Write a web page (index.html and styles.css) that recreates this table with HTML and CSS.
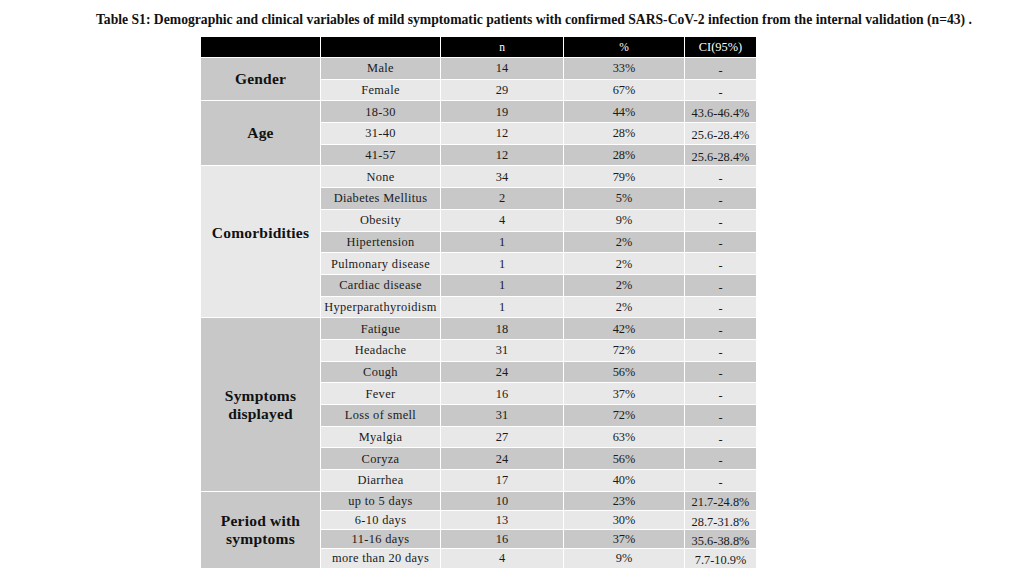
FILE: index.html
```html
<!DOCTYPE html>
<html lang="en">
<head>
<meta charset="utf-8">
<title>Table S1</title>
<link rel="stylesheet" href="styles.css">
</head>
<body>
<div class="page">
  <h1 class="title">Table S1: Demographic and clinical variables of mild symptomatic patients with confirmed SARS-CoV-2 infection from the internal validation (n=43) .</h1>
  <table class="data">
    <colgroup>
      <col class="c1"><col class="c2"><col class="c3"><col class="c4"><col class="c5">
    </colgroup>
    <thead>
      <tr class="head"><th></th><th></th><th>n</th><th>%</th><th class="ci">CI(95%)</th></tr>
    </thead>
    <tbody>
      <tr class="r dk"><td class="grp dk" rowspan="2">Gender</td><td class="lbl">Male</td><td>14</td><td>33%</td><td class="ci">-</td></tr>
      <tr class="r lt"><td class="lbl">Female</td><td>29</td><td>67%</td><td class="ci">-</td></tr>

      <tr class="r dk"><td class="grp dk" rowspan="3">Age</td><td class="lbl">18-30</td><td>19</td><td>44%</td><td class="ci">43.6-46.4%</td></tr>
      <tr class="r lt"><td class="lbl">31-40</td><td>12</td><td>28%</td><td class="ci">25.6-28.4%</td></tr>
      <tr class="r dk"><td class="lbl">41-57</td><td>12</td><td>28%</td><td class="ci">25.6-28.4%</td></tr>

      <tr class="r lt"><td class="grp lt comorb" rowspan="7">Comorbidities</td><td class="lbl">None</td><td>34</td><td>79%</td><td class="ci">-</td></tr>
      <tr class="r dk"><td class="lbl">Diabetes Mellitus</td><td>2</td><td>5%</td><td class="ci">-</td></tr>
      <tr class="r lt"><td class="lbl">Obesity</td><td>4</td><td>9%</td><td class="ci">-</td></tr>
      <tr class="r dk"><td class="lbl">Hipertension</td><td>1</td><td>2%</td><td class="ci">-</td></tr>
      <tr class="r lt"><td class="lbl">Pulmonary disease</td><td>1</td><td>2%</td><td class="ci">-</td></tr>
      <tr class="r dk"><td class="lbl">Cardiac disease</td><td>1</td><td>2%</td><td class="ci">-</td></tr>
      <tr class="r lt"><td class="lbl">Hyperparathyroidism</td><td>1</td><td>2%</td><td class="ci">-</td></tr>

      <tr class="r dk"><td class="grp dk" rowspan="8">Symptoms<br>displayed</td><td class="lbl">Fatigue</td><td>18</td><td>42%</td><td class="ci">-</td></tr>
      <tr class="r lt"><td class="lbl">Headache</td><td>31</td><td>72%</td><td class="ci">-</td></tr>
      <tr class="r dk"><td class="lbl">Cough</td><td>24</td><td>56%</td><td class="ci">-</td></tr>
      <tr class="r lt"><td class="lbl">Fever</td><td>16</td><td>37%</td><td class="ci">-</td></tr>
      <tr class="r dk"><td class="lbl">Loss of smell</td><td>31</td><td>72%</td><td class="ci">-</td></tr>
      <tr class="r lt"><td class="lbl">Myalgia</td><td>27</td><td>63%</td><td class="ci">-</td></tr>
      <tr class="r dk"><td class="lbl">Coryza</td><td>24</td><td>56%</td><td class="ci">-</td></tr>
      <tr class="r lt"><td class="lbl">Diarrhea</td><td>17</td><td>40%</td><td class="ci">-</td></tr>

      <tr class="s dk"><td class="grp dk" rowspan="4">Period with<br>symptoms</td><td class="lbl">up to 5 days</td><td>10</td><td>23%</td><td class="ci">21.7-24.8%</td></tr>
      <tr class="s lt"><td class="lbl">6-10 days</td><td>13</td><td>30%</td><td class="ci">28.7-31.8%</td></tr>
      <tr class="s dk"><td class="lbl">11-16 days</td><td>16</td><td>37%</td><td class="ci">35.6-38.8%</td></tr>
      <tr class="s lt"><td class="lbl">more than 20 days</td><td>4</td><td>9%</td><td class="ci">7.7-10.9%</td></tr>
    </tbody>
  </table>
</div>
</body>
</html>
```

FILE: styles.css
```css
html, body {
  margin: 0;
  padding: 0;
  background: #ffffff;
}

.page {
  width: 1024px;
  height: 576px;
  overflow: hidden;
  font-family: "Liberation Serif", "Times New Roman", serif;
  color: #1a1a1a;
}

.title {
  margin: 0;
  padding: 12px 0 0 96px;
  height: 24px;
  font-size: 13.65px;
  font-weight: bold;
  line-height: 16px;
  white-space: nowrap;
  color: #111;
}

.data {
  margin-left: 200px;
  border-collapse: collapse;
  table-layout: fixed;
  width: 556px;
}

.c1 { width: 120px; }
.c2 { width: 120px; }
.c3 { width: 123px; }
.c4 { width: 121px; }
.c5 { width: 72px; }

.data th,
.data td {
  border: 1px solid #ffffff;
  padding: 0;
  text-align: center;
  vertical-align: middle;
  font-size: 12.4px;
  line-height: 14px;
  white-space: nowrap;
}

.data td.lbl {
  letter-spacing: 0.35px;
}

.head {
  height: 21px;
}

.head th {
  background: #000000;
  color: #ffffff;
  font-weight: normal;
  font-size: 11.5px;
}

.head th.ci {
  font-size: 12.4px;
}

.r { height: 21.7px; }
.s { height: 19.2px; }

.dk td { background: #c8c8c8; }
.lt td { background: #e8e8e8; }

.data td.grp {
  font-weight: bold;
  font-size: 15.5px;
  line-height: 18px;
  color: #111;
  letter-spacing: 0.2px;
}

.data td.grp.dk { background: #c8c8c8; }
.data td.grp.lt { background: #e8e8e8; }

.data td.comorb {
  padding-bottom: 17px;
}

.data td.ci {
  padding-top: 3px;
  line-height: 12px;
}
```
